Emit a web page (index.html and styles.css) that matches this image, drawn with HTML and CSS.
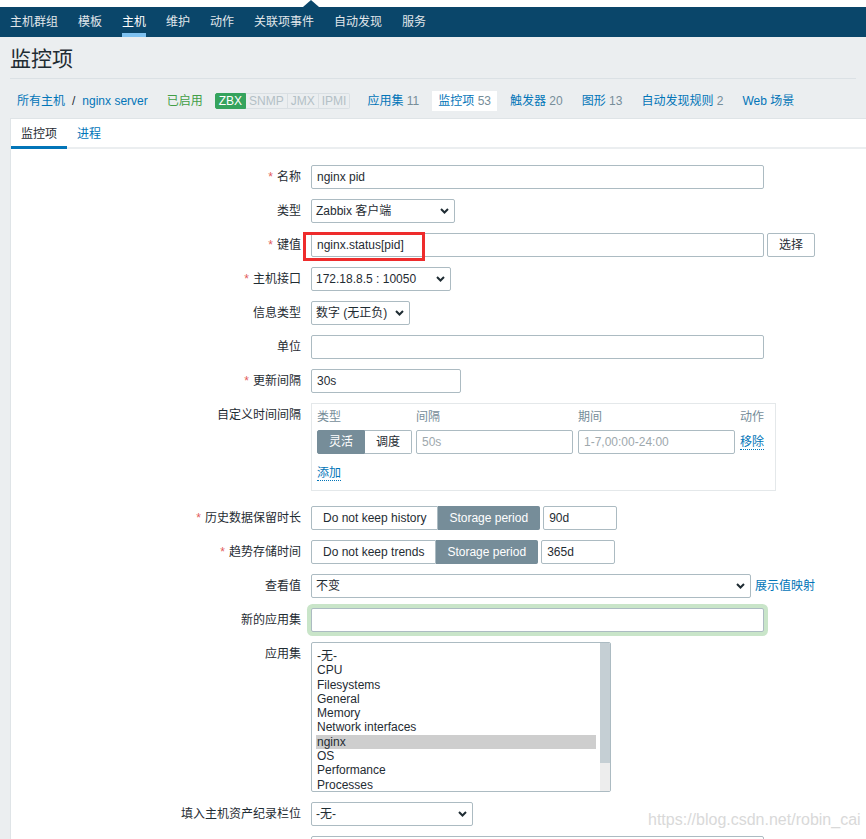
FILE: index.html
```html
<!DOCTYPE html>
<html lang="zh-CN">
<head>
<meta charset="utf-8">
<title>监控项</title>
<link rel="stylesheet" href="styles.css">
</head>
<body>
<div class="topstrip"><span class="pointer"></span></div>
<nav class="topnav">
  <ul>
    <li><a>主机群组</a></li>
    <li><a>模板</a></li>
    <li><a class="active">主机</a></li>
    <li><a>维护</a></li>
    <li><a>动作</a></li>
    <li><a>关联项事件</a></li>
    <li><a>自动发现</a></li>
    <li><a>服务</a></li>
  </ul>
</nav>
<header class="page-header"><h1>监控项</h1></header>
<div class="crumbs">
  <div class="crumb"><a>所有主机</a><span class="sep">/</span><a>nginx server</a></div>
  <div class="crumb status-on">已启用</div>
  <div class="avail"><span class="zbx">ZBX</span><span>SNMP</span><span>JMX</span><span class="last">IPMI</span></div>
  <div class="crumb"><a>应用集</a>&nbsp;<span class="count">11</span></div>
  <div class="crumb selected"><a>监控项</a>&nbsp;<span class="count">53</span></div>
  <div class="crumb"><a>触发器</a>&nbsp;<span class="count">20</span></div>
  <div class="crumb"><a>图形</a>&nbsp;<span class="count">13</span></div>
  <div class="crumb"><a>自动发现规则</a>&nbsp;<span class="count">2</span></div>
  <div class="crumb"><a>Web 场景</a></div>
</div>
<main class="panel">
  <div class="tabs"><a class="tab active">监控项</a><a class="tab">进程</a></div>
  <form class="form">
    <div class="row">
      <div class="label"><span class="req">*</span>名称</div>
      <div class="field"><input class="input w-wide" type="text" value="nginx pid"></div>
    </div>
    <div class="row">
      <div class="label">类型</div>
      <div class="field"><div class="select w-type"><span>Zabbix 客户端</span><svg class="chev" width="9" height="6" viewBox="0 0 9 6"><path d="M1 1 L4.5 4.5 L8 1" fill="none" stroke="#1f2c33" stroke-width="2"/></svg></div></div>
    </div>
    <div class="row">
      <div class="label"><span class="req">*</span>键值</div>
      <div class="field key-field">
        <input class="input w-wide" type="text" value="nginx.status[pid]">
        <button class="btn" type="button">选择</button>
        <span class="annot"></span>
      </div>
    </div>
    <div class="row">
      <div class="label"><span class="req">*</span>主机接口</div>
      <div class="field"><div class="select w-iface"><span>172.18.8.5 : 10050</span><svg class="chev" width="9" height="6" viewBox="0 0 9 6"><path d="M1 1 L4.5 4.5 L8 1" fill="none" stroke="#1f2c33" stroke-width="2"/></svg></div></div>
    </div>
    <div class="row">
      <div class="label">信息类型</div>
      <div class="field"><div class="select w-info"><span>数字 (无正负)</span><svg class="chev" width="9" height="6" viewBox="0 0 9 6"><path d="M1 1 L4.5 4.5 L8 1" fill="none" stroke="#1f2c33" stroke-width="2"/></svg></div></div>
    </div>
    <div class="row">
      <div class="label">单位</div>
      <div class="field"><input class="input w-wide" type="text" value=""></div>
    </div>
    <div class="row">
      <div class="label"><span class="req">*</span>更新间隔</div>
      <div class="field"><input class="input w-delay" type="text" value="30s"></div>
    </div>
    <div class="row row-intervals">
      <div class="label">自定义时间间隔</div>
      <div class="field">
        <div class="intervals">
          <div class="th">类型</div>
          <div class="th">间隔</div>
          <div class="th">期间</div>
          <div class="th">动作</div>
          <div class="seg"><span class="on">灵活</span><span>调度</span></div>
          <input class="input" type="text" placeholder="50s">
          <input class="input" type="text" placeholder="1-7,00:00-24:00">
          <div class="act"><a class="dlink">移除</a></div>
          <div class="add"><a class="dlink">添加</a></div>
        </div>
      </div>
    </div>
    <div class="row">
      <div class="label"><span class="req">*</span>历史数据保留时长</div>
      <div class="field">
        <div class="seg"><span>Do not keep history</span><span class="on">Storage period</span></div>
        <input class="input w-period" type="text" value="90d">
      </div>
    </div>
    <div class="row">
      <div class="label"><span class="req">*</span>趋势存储时间</div>
      <div class="field">
        <div class="seg"><span>Do not keep trends</span><span class="on">Storage period</span></div>
        <input class="input w-period" type="text" value="365d">
      </div>
    </div>
    <div class="row">
      <div class="label">查看值</div>
      <div class="field">
        <div class="select w-map"><span>不变</span><svg class="chev" width="9" height="6" viewBox="0 0 9 6"><path d="M1 1 L4.5 4.5 L8 1" fill="none" stroke="#1f2c33" stroke-width="2"/></svg></div>
        <a class="link map-link">展示值映射</a>
      </div>
    </div>
    <div class="row">
      <div class="label">新的应用集</div>
      <div class="field"><input class="input w-wide glow" type="text" value=""></div>
    </div>
    <div class="row">
      <div class="label">应用集</div>
      <div class="field">
        <div class="listbox">
          <ul>
            <li>-无-</li>
            <li>CPU</li>
            <li>Filesystems</li>
            <li>General</li>
            <li>Memory</li>
            <li>Network interfaces</li>
            <li class="sel">nginx</li>
            <li>OS</li>
            <li>Performance</li>
            <li>Processes</li>
          </ul>
          <div class="scroll"><div class="thumb"></div></div>
        </div>
      </div>
    </div>
    <div class="row">
      <div class="label">填入主机资产纪录栏位</div>
      <div class="field"><div class="select w-inv"><span>-无-</span><svg class="chev" width="9" height="6" viewBox="0 0 9 6"><path d="M1 1 L4.5 4.5 L8 1" fill="none" stroke="#1f2c33" stroke-width="2"/></svg></div></div>
    </div>
    <div class="row">
      <div class="label"></div>
      <div class="field"><div class="textarea w-wide"></div></div>
    </div>
  </form>
</main>
<div class="watermark">https://blog.csdn.net/robin_cai</div>
</body>
</html>
```
FILE: styles.css
```css
* { box-sizing: border-box; }
html, body { margin: 0; padding: 0; }
body {
  background: #ebeef0;
  font-family: "Liberation Sans", Arial, "Noto Sans CJK SC", sans-serif;
  font-size: 12px;
  line-height: 14px;
  color: #1f2c33;
}
a { text-decoration: none; cursor: pointer; }

.topstrip { position: relative; height: 7px; background: #fff; }
.pointer {
  position: absolute; left: 303px; top: 0; width: 0; height: 0;
  border-left: 8px solid transparent; border-right: 8px solid transparent;
  border-bottom: 7px solid #0a466a;
}
.topnav { background: #0a466a; height: 30px; }
.topnav ul { list-style: none; margin: 0; padding: 0; display: flex; }
.topnav li { padding: 0 10px; }
.topnav a {
  display: block; height: 30px; padding-top: 8px; line-height: 14px;
  border-bottom: 4px solid transparent; color: #e1e7eb;
}
.topnav a.active { color: #fff; border-bottom-color: #7ec1f0; }

.page-header { margin: 0 10px; padding: 10px 0 7px; border-bottom: 1px solid #dbe1e5; }
.page-header h1 { margin: 0; font-size: 21px; line-height: 24px; font-weight: normal; color: #1f2c33; }

.crumbs { display: flex; align-items: center; gap: 7px; padding: 12px 0 7px 11px; }
.crumb { display: flex; align-items: center; height: 20px; padding: 0 6px; white-space: nowrap; }
.crumb a { color: #0275b8; }
.crumb .sep { margin: 0 7px; color: #1f2c33; }
.crumb .count { color: #768d99; }
.crumb.selected { background: #fff; }
.status-on { color: #429e47; }
.avail { display: flex; margin-left: -1px; margin-right: 4px; }
.avail span {
  padding: 0 3px; line-height: 14px; border: 1px solid #d9dfe3; border-left: none;
  color: #b3c0c6;
}
.avail .zbx { background: #35a35d; border: 1px solid #35a35d; color: #fff; border-radius: 2px 0 0 2px; }
.avail .last { border-radius: 0 2px 2px 0; }

.panel {
  margin-left: 10px; background: #fff;
  border-top: 1px solid #dfe4e7; border-left: 1px solid #dfe4e7;
  padding-bottom: 40px;
}
.tabs { display: flex; border-bottom: 2px solid #ebeef0; }
.tab {
  padding: 8px 10px 5px; line-height: 14px;
  border-bottom: 3px solid transparent; margin-bottom: -2px; color: #0275b8;
}
.tab.active { color: #1f2c33; border-bottom-color: #0275b8; }

.form { padding-top: 16px; margin: 0; }
.row { display: grid; grid-template-columns: 290px 1fr; column-gap: 10px; margin-bottom: 10px; }
.row-intervals { margin-bottom: 15px; }
.label { text-align: right; line-height: 24px; white-space: nowrap; color: #1f2c33; }
.req { color: #e25b5b; margin-right: 4px; }
.field { display: flex; align-items: flex-start; }

.input {
  height: 24px; border: 1px solid #acbbc2; border-radius: 2px; background: #fff;
  padding: 0 5px; margin: 0; font: inherit; font-size: 12px; color: #1f2c33; outline: none;
}
.input::placeholder { color: #9ea8ad; }
.textarea { height: 60px; border: 1px solid #acbbc2; border-radius: 2px; background: #fff; }
.w-wide { width: 453px; }
.w-type { width: 144px; }
.w-iface { width: 140px; }
.w-info { width: 99px; }
.w-delay { width: 150px; }
.w-period { width: 74px; margin-left: 3px; }
.w-map { width: 440px; }
.w-inv { width: 162px; }

.select {
  display: flex; align-items: center; justify-content: space-between;
  height: 24px; border: 1px solid #acbbc2; border-radius: 2px; background: #fff;
  padding: 0 5px 0 4px; white-space: nowrap;
}
.chev { flex: none; margin-left: 6px; }

.key-field { position: relative; }
.annot {
  position: absolute; left: -8px; top: -1px; width: 122px; height: 29px;
  border: 3px solid #ee2c2c; pointer-events: none;
}
.btn {
  height: 24px; width: 48px; margin: 0 0 0 3px; padding: 0;
  border: 1px solid #acbbc2; border-radius: 2px; background: #fff;
  font: inherit; font-size: 12px; color: #1f2c33;
}

.intervals {
  width: 465px; border: 1px solid #e4e8ea; padding: 6px 5px 9px;
  display: grid; grid-template-columns: 94px 157px 157px auto; column-gap: 5px;
}
.intervals .th { color: #768d99; line-height: 14px; margin-bottom: 6px; }
.intervals .input { width: 100%; }
.act { display: flex; align-items: center; }
.add { grid-column: 1 / -1; margin-top: 12px; display: flex; }
.dlink { color: #0275b8; line-height: 14px; border-bottom: 1px dotted #0275b8; }
.link { color: #0275b8; }
.map-link { margin-left: 4px; line-height: 24px; white-space: nowrap; }

.seg { display: flex; }
.seg span {
  height: 24px; line-height: 22px; padding: 0 11px; white-space: nowrap;
  border: 1px solid #acbbc2; background: #fff; color: #1f2c33;
}
.seg span + span { border-left: none; }
.seg span:first-child { border-radius: 2px 0 0 2px; }
.seg span:last-child { border-radius: 0 2px 2px 0; }
.seg span.on { background: #768d99; border-color: #768d99; color: #fff; }

.glow { box-shadow: 0 0 0 4px #c9e5c9; }

.listbox {
  width: 300px; height: 150px; border: 1px solid #acbbc2; border-radius: 2px;
  display: flex; overflow: hidden; background: #fff;
}
.listbox ul { flex: 1; list-style: none; margin: 0; padding: 6px 4px 0 4px; overflow: hidden; }
.listbox li { line-height: 14.3px; padding-left: 1px; white-space: nowrap; color: #1f2c33; }
.listbox li.sel { background: #cecece; }
.scroll { flex: none; width: 10px; background: #ededed; }
.thumb { height: 120px; background: #c5cfd4; }

.watermark {
  position: absolute; left: 648px; top: 810px;
  font-family: "Liberation Sans", Arial, sans-serif; font-size: 16px; line-height: 20px;
  color: #d9d9d9; white-space: nowrap; pointer-events: none;
}
```
